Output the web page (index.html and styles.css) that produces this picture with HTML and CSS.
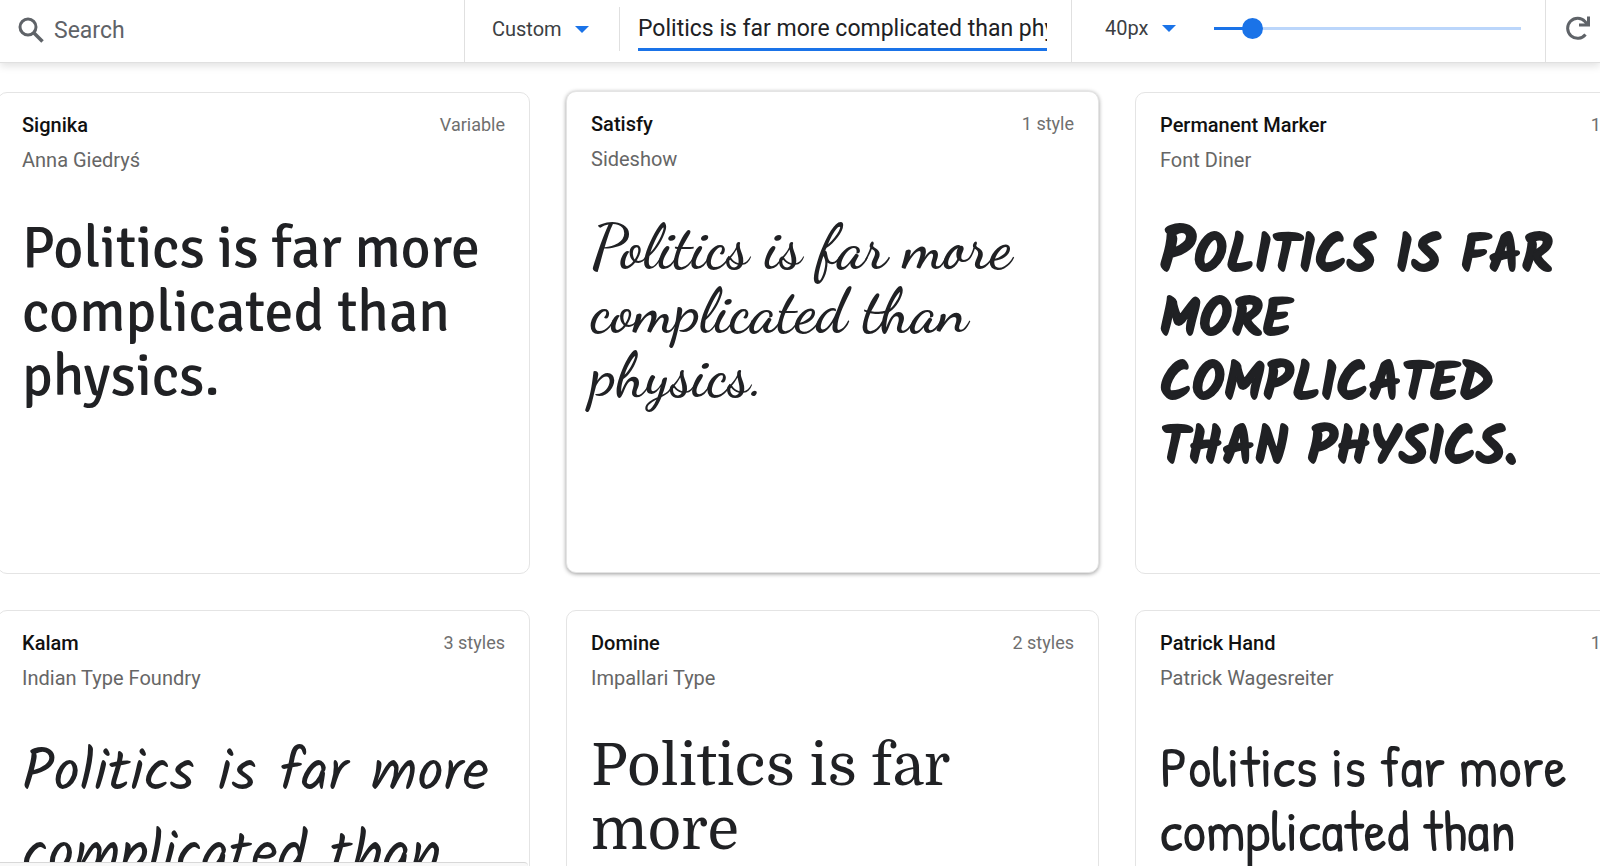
FILE: index.html
```
<!DOCTYPE html>
<html lang="en">
<head>
    <meta charset="UTF-8">
    <meta name="viewport" content="width=device-width, initial-scale=1.0">
    <title>Browse Fonts</title>
    <link rel="stylesheet" href="styles.css">
</head>
<body>
    <header class="toolbar">
        <div class="search">
            <svg class="search-icon" viewBox="0 0 26 26" aria-hidden="true">
                <circle cx="10" cy="10" r="8" fill="none" stroke="#5f6368" stroke-width="3"/>
                <path d="M15.500 15.500L24.500 24.500" fill="none" stroke="#5f6368" stroke-width="3.500"/>
            </svg>
            <input type="search" class="search-input" placeholder="Search" aria-label="Search fonts">
        </div>

        <div class="preview">
            <div class="dropdown">
                <select class="type-select" aria-label="Preview text type">
                    <option>Custom</option>
                    <option>Sentence</option>
                    <option>Alphabet</option>
                </select>
                <span class="arrow"></span>
            </div>
            <div class="preview-field">
                <input type="text" class="preview-input" aria-label="Preview text" value="Politics is far more complicated than physics.">
            </div>
        </div>

        <div class="size">
            <div class="dropdown">
                <select class="size-select" aria-label="Font size">
                    <option>40px</option>
                    <option>64px</option>
                    <option>96px</option>
                </select>
                <span class="arrow"></span>
            </div>
            <input type="range" class="slider" min="12" max="300" value="40" aria-label="Font size slider">
        </div>

        <button type="button" class="reset" aria-label="Reset">
            <svg class="reset-icon" viewBox="0 0 24 24" aria-hidden="true">
                <path d="M19.500 18.500A10 10 0 1 1 19 5.500L21 8" fill="none" stroke="#5f6368" stroke-width="3"/>
                <path d="M22.500 0.500V9H13" fill="none" stroke="#5f6368" stroke-width="3"/>
            </svg>
        </button>
    </header>

    <main class="fonts">
        <article class="card">
            <div class="card-head">
                <h2>Signika</h2>
                <span class="styles">Variable</span>
            </div>
            <p class="author">Anna Giedryś</p>
            <p class="sample signika">Politics is far more complicated than physics.</p>
        </article>

        <article class="card active">
            <div class="card-head">
                <h2>Satisfy</h2>
                <span class="styles">1 style</span>
            </div>
            <p class="author">Sideshow</p>
            <p class="sample satisfy">Politics is far more complicated than physics.</p>
        </article>

        <article class="card">
            <div class="card-head">
                <h2>Permanent Marker</h2>
                <span class="styles">1 style</span>
            </div>
            <p class="author">Font Diner</p>
            <p class="sample marker">Politics is far more complicated than physics.</p>
        </article>

        <article class="card">
            <div class="card-head">
                <h2>Kalam</h2>
                <span class="styles">3 styles</span>
            </div>
            <p class="author">Indian Type Foundry</p>
            <p class="sample kalam">Politics is far more complicated than physics.</p>
        </article>

        <article class="card">
            <div class="card-head">
                <h2>Domine</h2>
                <span class="styles">2 styles</span>
            </div>
            <p class="author">Impallari Type</p>
            <p class="sample domine">Politics is far more complicated than physics.</p>
        </article>

        <article class="card">
            <div class="card-head">
                <h2>Patrick Hand</h2>
                <span class="styles">1 style</span>
            </div>
            <p class="author">Patrick Wagesreiter</p>
            <p class="sample patrick">Politics is far more complicated than physics.</p>
        </article>
    </main>

    <div class="status-bar"></div>
</body>
</html>
```
FILE: styles.css
```
* {
    box-sizing: border-box;
}

body {
    font-family: Roboto, Arial, sans-serif;
    margin: 0;
    height: 100vh;
    overflow: hidden;
    background-color: #fff;
    color: #202124;
}

input, select, button {
    font-family: inherit;
    border: none;
    background: none;
    padding: 0;
    margin: 0;
    outline: none;
}

/* Toolbar */
.toolbar {
    display: grid;
    grid-template-columns: 464fr 607fr 474fr 55px;
    height: 63px;
    border-bottom: 1px solid #e0e0e0;
    box-shadow: 0 3px 8px rgba(0, 0, 0, 0.12);
}

.search {
    display: flex;
    align-items: center;
    gap: 10px;
    min-width: 0;
    padding: 0 18px 2px;
}

.search-icon {
    width: 26px;
    height: 26px;
    flex: none;
}

.search-input {
    flex: 1;
    min-width: 0;
    font-size: 23px;
}

.search-input::placeholder {
    color: #5f6368;
}

.preview {
    display: flex;
    align-items: center;
    min-width: 0;
    padding: 0 24px 4px 27px;
    border-left: 1px solid #e0e0e0;
}

.dropdown {
    display: flex;
    align-items: center;
    flex: none;
}

.dropdown select {
    appearance: none;
    font-size: 20px;
    color: #3c4043;
}

.type-select {
    width: 83px;
}

.size-select {
    width: 57px;
}

.arrow {
    border: 7px solid transparent;
    border-top-color: #1a73e8;
    border-bottom: none;
    pointer-events: none;
}

.preview-field {
    flex: 1;
    min-width: 0;
    margin-left: 30px;
    padding-left: 18px;
    border-left: 1px solid #e0e0e0;
}

.preview-input {
    display: block;
    width: 100%;
    height: 44px;
    padding-top: 2px;
    font-size: 23px;
    color: #202124;
    border-bottom: 3px solid #1a73e8;
}

.size {
    display: flex;
    align-items: center;
    min-width: 0;
    padding: 0 24px 6px 33px;
    border-left: 1px solid #e0e0e0;
}

.slider {
    appearance: none;
    flex: 1;
    min-width: 0;
    height: 21px;
    margin-left: 38px;
    background: linear-gradient(to right, #1a73e8 12%, #bbd6fb 12%) center / 100% 3px no-repeat;
}

.slider::-webkit-slider-thumb {
    appearance: none;
    width: 21px;
    height: 21px;
    border-radius: 50%;
    background: #1a73e8;
}

.reset {
    padding: 0 0 6px 20px;
    text-align: left;
    border-left: 1px solid #e0e0e0;
}

.reset-icon {
    display: block;
    width: 24px;
    height: 24px;
}

/* Font cards, the row runs past both sides of the window */
.fonts {
    display: grid;
    grid-template-columns: repeat(3, 1fr);
    gap: 36px;
    margin: 29px -68px 0 -3px;
}

.card {
    height: 482px;
    min-width: 0;
    padding: 20px 24px;
    border: 1px solid #e4e4e4;
    border-radius: 10px;
    background: #fff;
    overflow: hidden;
}

.card.active {
    transform: translateY(-1px);
    box-shadow: 0 1px 4px rgba(0, 0, 0, 0.4);
}

.card-head {
    display: flex;
    justify-content: space-between;
    align-items: center;
    height: 23px;
}

.card h2 {
    margin: 0;
    font-size: 20px;
    font-weight: 500;
    color: #111;
}

.styles {
    font-size: 18px;
    color: #6f6f6f;
}

.author {
    margin: 12px 0 44px;
    font-size: 20px;
    line-height: 24px;
    color: #666;
}

.sample {
    margin: 0;
    font-size: 58px;
    line-height: 64px;
    color: #202124;
}

.signika {
    font-family: Signika, "Noto Sans", sans-serif;
}

.satisfy {
    font-family: Satisfy, "Dancing Script", Kalam, cursive;
    font-size: 62px;
    font-weight: 600;
}

.marker {
    padding: 8px 24px 0 0;
    font-family: "Permanent Marker", Kalam, cursive;
    font-size: 52px;
    font-weight: 700;
    text-transform: uppercase;
    -webkit-text-stroke: 2px #202124;
}

.marker::first-letter {
    font-size: 62px;
}

.kalam {
    font-family: Kalam, Lato, sans-serif;
    line-height: 82px;
}

.domine {
    font-family: Domine, "DejaVu Serif Condensed", serif;
}

.patrick {
    font-family: "Patrick Hand", Lato, sans-serif;
}

.status-bar {
    position: absolute;
    left: 0;
    bottom: 0;
    width: 33%;
    height: 4px;
    background: #f8f8f8;
    border-top: 1px solid #d8d8d8;
    border-top-right-radius: 4px;
}
```
